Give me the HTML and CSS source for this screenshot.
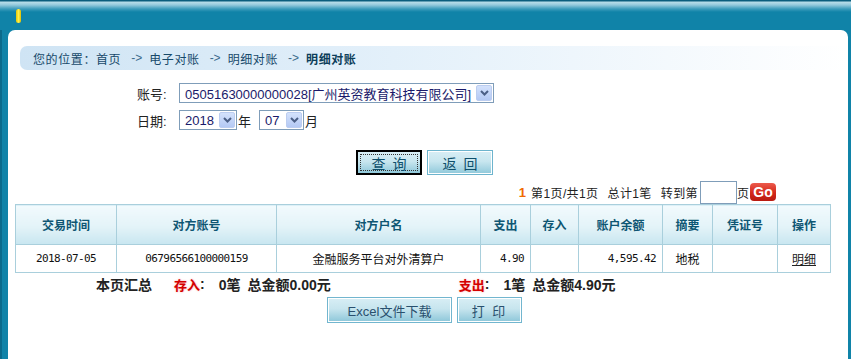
FILE: index.html
```
<!DOCTYPE html>
<html lang="zh">
<head>
<meta charset="utf-8">
<title>明细对账</title>
<link rel="stylesheet" href="styles.css">
</head>
<body>
<div class="frame">
  <div class="topbar"><span class="pill"></span></div>
  <div class="main">
    <div class="crumb">
      <span>您的位置：首页</span><span class="arr">-&gt;</span><span>电子对账</span><span class="arr">-&gt;</span><span>明细对账</span><span class="arr">-&gt;</span><b>明细对账</b>
    </div>

    <div class="form">
      <div class="row">
        <span class="lbl">账号:</span>
        <div class="sel sel-acct"><span class="val">05051630000000028[广州英资教育科技有限公司]</span><span class="drop"><svg width="9" height="6" viewBox="0 0 9 6"><path d="M1 1 L4.5 4.5 L8 1" fill="none" stroke="#4b5f86" stroke-width="2"/></svg></span></div>
      </div>
      <div class="row">
        <span class="lbl">日期:</span>
        <div class="sel sel-year"><span class="val">2018</span><span class="drop"><svg width="9" height="6" viewBox="0 0 9 6"><path d="M1 1 L4.5 4.5 L8 1" fill="none" stroke="#4b5f86" stroke-width="2"/></svg></span></div>
        <span class="unit">年</span>
        <div class="sel sel-month"><span class="val">07</span><span class="drop"><svg width="9" height="6" viewBox="0 0 9 6"><path d="M1 1 L4.5 4.5 L8 1" fill="none" stroke="#4b5f86" stroke-width="2"/></svg></span></div>
        <span class="unit">月</span>
      </div>
    </div>

    <div class="btns">
      <button class="btn btn-focus"><span class="inner">查询</span></button>
      <button class="btn"><span class="inner">返回</span></button>
    </div>

    <div class="pager">
      <b class="cur">1</b><span class="pt">第1页/共1页</span><span class="pt">总计1笔</span><span class="pt pt-last">转到第</span><span class="pinput"></span><span>页</span><span class="go">Go</span>
    </div>

    <table class="grid">
      <colgroup>
        <col style="width:101px"><col style="width:160px"><col style="width:204px"><col style="width:50px"><col style="width:48px"><col style="width:84px"><col style="width:50px"><col style="width:65px"><col style="width:53px">
      </colgroup>
      <thead>
        <tr><th>交易时间</th><th>对方账号</th><th>对方户名</th><th>支出</th><th>存入</th><th>账户余额</th><th>摘要</th><th>凭证号</th><th>操作</th></tr>
      </thead>
      <tbody>
        <tr>
          <td class="c mono">2018-07-05</td>
          <td class="c mono">06796566100000159</td>
          <td class="c">金融服务平台对外清算户</td>
          <td class="r mono">4.90</td>
          <td></td>
          <td class="r mono">4,595.42</td>
          <td class="c">地税</td>
          <td></td>
          <td class="c"><a class="lnk">明细</a></td>
        </tr>
      </tbody>
    </table>

    <div class="sum">
      <b class="s-title">本页汇总</b>
      <span class="red g1">存入</span><b>:</b>
      <b class="g2">0笔</b><b class="g3">总金额0.00元</b>
      <span class="red g4">支出</span><b>:</b>
      <b class="g2">1笔</b><b class="g3">总金额4.90元</b>
    </div>

    <div class="btns2">
      <button class="btn2">Excel文件下载</button>
      <button class="btn2 btn2-print">打&nbsp;印</button>
    </div>
  </div>
</div>
</body>
</html>
```
FILE: styles.css
```
* { box-sizing: border-box; }
html, body { margin: 0; padding: 0; }
body {
  font-family: "Liberation Sans", "Noto Sans CJK SC", sans-serif;
  font-size: 12px;
  color: #222;
  background: #fff;
}
.frame {
  height: 359px;
  overflow: hidden;
  background: #1083a8;
  box-shadow: inset 2px 0 0 #0b6a8b;
  display: flex;
  flex-direction: column;
}
.topbar {
  height: 30px;
  flex: none;
  background: linear-gradient(to bottom, #0a5d7d 0, #0a5d7d 1px, #b9deea 2px, #93c9dc 5px, #3a9bbb 9px, #1083a8 12px, #1083a8 100%);
  padding: 9px 0 0 16px;
}
.pill {
  display: block;
  width: 5px;
  height: 14px;
  border-radius: 3px;
  background: linear-gradient(to right, #e8c800, #fff04a 50%, #e0c000);
}
.main {
  flex: 1;
  margin: 0 3px 0 8px;
  background: #fff;
  border-radius: 7px 7px 0 0;
  padding: 16px 0 0 12px;
}
.crumb {
  height: 24px;
  border-radius: 7px;
  background: linear-gradient(to right, #cfe4f4 0%, #e3f0fa 45%, #ffffff 100%);
  display: flex;
  align-items: center;
  padding-left: 13px;
  color: #17496a;
  font-size: 12px;
  letter-spacing: 0.6px;
}
.crumb .arr { margin: 0 7px 0 10px; letter-spacing: 0; color: #3d6b8c; }
.crumb b { color: #0c3e5a; }

.form { margin: 13px 0 0 117px; }
.row { display: flex; align-items: center; height: 20px; margin-bottom: 7px; }
.lbl { width: 42px; font-size: 13px; color: #222; }
.unit { font-size: 13px; color: #222; margin-left: 1px; }
.sel {
  height: 20px;
  border: 1px solid #7f9db9;
  background: #fff;
  display: flex;
  align-items: center;
  justify-content: space-between;
  padding: 0 1px 0 5px;
  font-size: 13px;
  color: #1a1a6a;
}
.sel .val { white-space: nowrap; overflow: hidden; flex: 1; min-width: 0; }
.sel-acct { width: 315px; }
.sel-year { width: 58px; }
.sel-month { width: 45px; margin-left: 8px; }
.drop {
  flex: none;
  width: 16px;
  height: 16px;
  border-radius: 2px;
  background: linear-gradient(to bottom, #d4e2fc, #b4c9f4);
  border: 1px solid #bccdf0;
  display: flex;
  align-items: center;
  justify-content: center;
}

.btns {
  display: flex;
  justify-content: center;
  gap: 5px;
  margin: 20px 0 0 -19px;
}
.btn {
  width: 66px;
  height: 25px;
  padding: 0;
  border: 1px solid #6db4cd;
  box-shadow: inset 0 0 0 1px #fff;
  background: linear-gradient(to bottom, #d8eef5 0%, #c8e6ef 45%, #8fc8da 100%);
  font: 14px "Liberation Sans", "Noto Sans CJK SC", sans-serif;
  color: #0d4f6b;
  letter-spacing: 7px;
  display: flex;
  align-items: center;
  justify-content: center;
}
.btn .inner { padding-left: 7px; }
.btn-focus {
  border: 2px solid #000;
  box-shadow: none;
}
.btn-focus .inner {
  display: flex;
  align-items: center;
  justify-content: center;
  width: 58px;
  height: 17px;
  border: 1px dotted #333;
}

.pager {
  display: flex;
  justify-content: flex-end;
  align-items: center;
  margin: 5px 72px 0 0;
  height: 24px;
  font-size: 12px;
  color: #222;
}
.pager .cur { color: #f06a00; font-size: 13px; margin-right: 5px; }
.pager .pt { margin-right: 9px; letter-spacing: 0.4px; }
.pager .pt-last { margin-right: 2px; }
.pinput {
  width: 37px;
  height: 23px;
  border: 1px solid #7f9db9;
  background: #fff;
}
.go {
  margin-left: 1px;
  width: 26px;
  height: 18px;
  border-radius: 4px;
  background: linear-gradient(to bottom, #ec5a4c 0%, #d3281b 55%, #b81a10 100%);
  color: #fff;
  font-weight: bold;
  font-size: 14px;
  font-family: "Liberation Sans", sans-serif;
  display: flex;
  align-items: center;
  justify-content: center;
}

.grid {
  margin-left: -5px;
  width: 815px;
  table-layout: fixed;
  border-collapse: collapse;
}
.grid th, .grid td { border: 1px solid #a9cfdc; padding: 0 6px; }
.grid th {
  height: 40px;
  background: linear-gradient(to bottom, #f2fafd 0%, #e3f3f8 55%, #c8e6f0 100%);
  color: #0e5673;
  font-weight: bold;
  font-size: 12px;
  text-align: center;
}
.grid td { height: 28px; font-size: 12px; color: #111; }
.grid .c { text-align: center; }
.grid .r { text-align: right; }
.grid .mono {
  font-family: "DejaVu Sans Mono", monospace;
  font-size: 11px;
  letter-spacing: -0.6px;
}
.lnk { color: #222; text-decoration: underline; }

.sum {
  display: flex;
  align-items: center;
  height: 22px;
  padding-left: 76px;
  font-size: 14px;
  color: #222;
}
.sum b { font-weight: bold; }
.red {
  color: #d40000;
  font-weight: bold;
  font-size: 13px;
  text-shadow: 0 0 2px #f7a0a0, 0 0 1px #fff;
}
.g1 { margin-left: 22px; }
.g2 { margin-left: 14px; }
.g3 { margin-left: 7px; }
.g4 { margin-left: 128px; }

.btns2 {
  display: flex;
  justify-content: center;
  gap: 5px;
  margin: 2px 0 0 -19px;
}
.btn2 {
  width: 125px;
  height: 26px;
  padding: 0;
  border: 1px solid #72b6cf;
  box-shadow: inset 0 0 0 1px #fff;
  background: linear-gradient(to bottom, #d8eef5 0%, #c7e5ee 45%, #8cc6d9 100%);
  font: 13px "Liberation Sans", "Noto Sans CJK SC", sans-serif;
  color: #29506e;
}
.btn2-print { width: 65px; letter-spacing: 2px; }
```
